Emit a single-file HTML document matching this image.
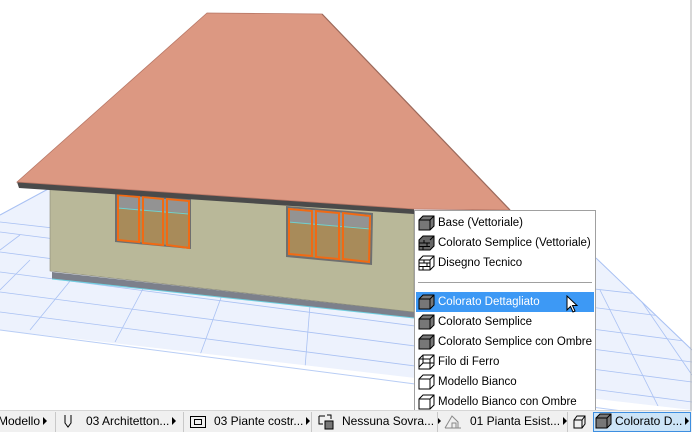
<!DOCTYPE html>
<html><head><meta charset="utf-8"><style>
*{margin:0;padding:0;box-sizing:border-box}
body{width:692px;height:432px;overflow:hidden;background:#fff;font-family:"Liberation Sans",sans-serif;position:relative}
svg.scene{position:absolute;left:0;top:0}
.menu{position:absolute;left:414px;top:210px;width:182px;height:203px;background:#fff;border:1px solid #a0a0a0;font-size:11.5px;color:#000}
.it{position:absolute;left:1px;height:20px;width:178px;line-height:20px;padding-left:22px}
.it svg{position:absolute;left:2px;top:2px}
.sel{background:#3d99f5;color:#fff}
.sep{position:absolute;left:3px;right:3px;top:71px;height:1px;background:#a0a0a0}
.bar{position:absolute;left:0;top:410px;width:692px;height:22px;background:#f0f0f0;border-top:1px solid #d6d6d6;font-size:12px;color:#000}
.bar span{position:absolute;top:3px;white-space:nowrap}
.dv{position:absolute;top:1px;width:1px;height:20px;background:#c8c8c8}
.tri{display:inline-block;width:0;height:0;border-left:4px solid #000;border-top:4px solid transparent;border-bottom:4px solid transparent;margin-left:3px;vertical-align:0px}
</style></head><body>
<svg class="scene" width="692" height="432" viewBox="0 0 692 432">
<defs><clipPath id="fl"><polygon points="0,215 50,188 560,215 596,258 692,350 692,410 0,330"/></clipPath></defs>
<polygon points="0,215 50,188 560,215 596,258 692,350 692,410 0,330" fill="#edf2fd"/>
<g stroke="#a9c1f3" stroke-width="0.8" fill="none" clip-path="url(#fl)">
<line x1="0" y1="232" x2="692" y2="320"/>
<line x1="0" y1="252" x2="692" y2="342"/>
<line x1="0" y1="272" x2="692" y2="362"/>
<line x1="0" y1="292" x2="692" y2="382"/>
<line x1="0" y1="312" x2="692" y2="402"/>
<line x1="0" y1="222" x2="692" y2="300"/>
<line x1="30" y1="330" x2="75" y2="275"/>
<line x1="115" y1="342" x2="145" y2="285"/>
<line x1="200" y1="355" x2="222" y2="295"/>
<line x1="305" y1="368" x2="310" y2="305"/>
<line x1="0" y1="290" x2="30" y2="260"/>
<line x1="0" y1="250" x2="20" y2="235"/>
<line x1="600" y1="290" x2="660" y2="410"/>
<line x1="620" y1="270" x2="692" y2="375"/>
</g>
<line x1="0" y1="330" x2="692" y2="420" stroke="#b8cdf5"/>
<line x1="0" y1="215" x2="50" y2="188" stroke="#a9c1f3"/>
<line x1="596" y1="258" x2="692" y2="350" stroke="#a9c1f3"/>
<polygon points="52,272 414,312 414,318 52,279" fill="#7c808b"/>
<line x1="52" y1="279" x2="414" y2="318" stroke="#6fd0e0" stroke-width="1"/>
<polygon points="50,188 414,213 414,312 50,271" fill="#b9b899" stroke="#8a8a78" stroke-width="0.6"/>
<g>
<polygon points="115,193 191,199 191,249 115,242" fill="#6f6f6f"/>
<polygon points="117,195 189,201 189,247 117,240" fill="#a88b5a"/>
<polygon points="117,195 189,201 189,213 117,208" fill="#939393"/>
<line x1="117" y1="208" x2="189" y2="214" stroke="#6fd0d0"/>
<g stroke="#f06a14" stroke-width="2" fill="none">
<polygon points="118,195 139,197 139,242 118,240"/>
<polygon points="143,197 163,199 163,245 143,243"/>
<polygon points="167,199 189,201 189,248 167,245"/>
</g>
</g>
<g>
<polygon points="286,206 373,213 372,265 286,257" fill="#6f6f6f"/>
<polygon points="288,208 371,215 370,263 288,255" fill="#a88b5a"/>
<polygon points="288,208 371,215 371,228 288,222" fill="#939393"/>
<line x1="288" y1="222" x2="371" y2="229" stroke="#6fd0d0"/>
<g stroke="#f06a14" stroke-width="2" fill="none">
<polygon points="289,209 312,211 312,256 289,254"/>
<polygon points="316,211 339,213 339,259 316,257"/>
<polygon points="343,213 370,216 369,262 343,259"/>
</g>
</g>
<polygon points="17,182 414,208 414,214 19,188" fill="#4a4a4a"/>
<polygon points="17,182 207,13 322,14 510,210 414,209" fill="#dc9882" stroke="#b87766" stroke-width="0.8"/>
<line x1="322" y1="14" x2="510" y2="210" stroke="#9c6a5c" stroke-width="1.2"/>
<line x1="691" y1="0" x2="691" y2="410" stroke="#b0b0b0"/>
</svg>

<div class="menu">
<div class="it" style="top:2px"><svg width="18" height="16"><path d="M1 5 L5 1 H16 V11 L12 15 H1Z" fill="#777" stroke="#000"/><path d="M1 5 H12 V15 M12 5 L16 1" stroke="#000" fill="none"/></svg>Base (Vettoriale)</div>
<div class="it" style="top:22px"><svg width="18" height="16"><path d="M1 5 L5 1 H16 V11 L12 15 H1Z" fill="#666" stroke="#000"/><path d="M1 8 H12 M1 11.5 H12 M6 5 V8 M9 8 V11.5 M5 11.5 V15 M12 5 L16 1" stroke="#000" fill="none"/></svg>Colorato Semplice (Vettoriale)</div>
<div class="it" style="top:42px"><svg width="18" height="16"><path d="M1 5 L5 1 H16 V11 L12 15 H1Z" fill="#fff" stroke="#000"/><path d="M1 5 H12 V15 M1 8 H12 M1 11.5 H12 M6 5 V8 M9 8 V11.5 M5 11.5 V15 M12 5 L16 1" stroke="#000" fill="none"/></svg>Disegno Tecnico</div>
<div class="sep"></div>
<div class="it sel" style="top:81px"><svg width="18" height="16"><path d="M1 5 L5 1 H16 V11 L12 15 H1Z" fill="#777" stroke="#000"/><path d="M1 5 H12 V15 M12 5 L16 1" stroke="#000" fill="none"/></svg>Colorato Dettagliato
<svg width="14" height="20" style="left:150px;top:3px"><path d="M1 1 V15 L4.5 11.5 L7 17 L9 16 L6.5 10.5 H11Z" fill="#fff" stroke="#000"/></svg></div>
<div class="it" style="top:101px"><svg width="18" height="16"><path d="M1 5 L5 1 H16 V11 L12 15 H1Z" fill="#777" stroke="#000"/><path d="M1 5 H12 V15 M12 5 L16 1" stroke="#000" fill="none"/></svg>Colorato Semplice</div>
<div class="it" style="top:121px"><svg width="18" height="16"><path d="M1 5 L5 1 H16 V11 L12 15 H1Z" fill="#777" stroke="#000"/><path d="M1 5 H12 V15 M12 5 L16 1" stroke="#000" fill="none"/></svg>Colorato Semplice con Ombre</div>
<div class="it" style="top:141px"><svg width="18" height="16"><path d="M1 5 L5 1 H16 V11 L12 15 H1Z M1 5 H12 V15 M12 5 L16 1 M5 1 V9 L1 13 M5 9 H16" stroke="#000" fill="#fff"/></svg>Filo di Ferro</div>
<div class="it" style="top:161px"><svg width="18" height="16"><path d="M1 5 L5 1 H16 V11 L12 15 H1Z" fill="#fff" stroke="#000"/><path d="M1 5 H12 V15 M12 5 L16 1" stroke="#000" fill="none"/></svg>Modello Bianco</div>
<div class="it" style="top:181px"><svg width="18" height="16"><path d="M1 5 L5 1 H16 V11 L12 15 H1Z" fill="#fff" stroke="#000"/><path d="M1 5 H12 V15 M12 5 L16 1" stroke="#000" fill="none"/></svg>Modello Bianco con Ombre</div>
</div>

<div class="bar">
<span style="left:-2px">Modello<i class="tri"></i></span>
<div class="dv" style="left:55px"></div>
<svg style="position:absolute;left:63px;top:4px" width="10" height="14"><path d="M2 0 V8 L5 12 L8 8 V0" stroke="#000" fill="none"/></svg>
<span style="left:86px">03 Architetton...<i class="tri"></i></span>
<div class="dv" style="left:183px"></div>
<svg style="position:absolute;left:190px;top:5px" width="16" height="12"><rect x="0.5" y="0.5" width="15" height="11" fill="none" stroke="#000"/><rect x="4.5" y="3.5" width="7" height="5" fill="none" stroke="#000"/></svg>
<span style="left:214px">03 Piante costr...<i class="tri"></i></span>
<div class="dv" style="left:311px"></div>
<svg style="position:absolute;left:318px;top:3px" width="16" height="16"><path d="M1 2 H7 M1 2 V10 H5" stroke="#000" fill="none"/><rect x="7" y="7" width="8" height="8" fill="#777" stroke="#000"/><path d="M9 1 H13 V5" stroke="#000" fill="none"/></svg>
<span style="left:342px">Nessuna Sovra...<i class="tri"></i></span>
<div class="dv" style="left:437px"></div>
<svg style="position:absolute;left:444px;top:3px" width="18" height="16"><path d="M1 14 L8 2 L14 8 V14 M1 14 H17 M8 14 V9 H12 V14" stroke="#888" fill="none"/></svg>
<span style="left:470px">01 Pianta Esist...<i class="tri"></i></span>
<div class="dv" style="left:567px"></div>
<svg style="position:absolute;left:573px;top:4px" width="14" height="14"><path d="M1 5 L4 1 H12 V9 L9 13 H1Z M1 5 H9 V13 M9 5 L12 1" stroke="#000" fill="none"/></svg>
<div style="position:absolute;left:593px;top:1px;width:98px;height:20px;background:#cce4f7;border:1px solid #3d8ee0"></div>
<svg style="position:absolute;left:595px;top:2px" width="18" height="16"><path d="M1 5 L5 1 H16 V11 L12 15 H1Z" fill="#777" stroke="#000"/><path d="M1 5 H12 V15 M12 5 L16 1" stroke="#000" fill="none"/></svg>
<span style="left:615px">Colorato D...<i class="tri"></i></span>
</div>
</body></html>
